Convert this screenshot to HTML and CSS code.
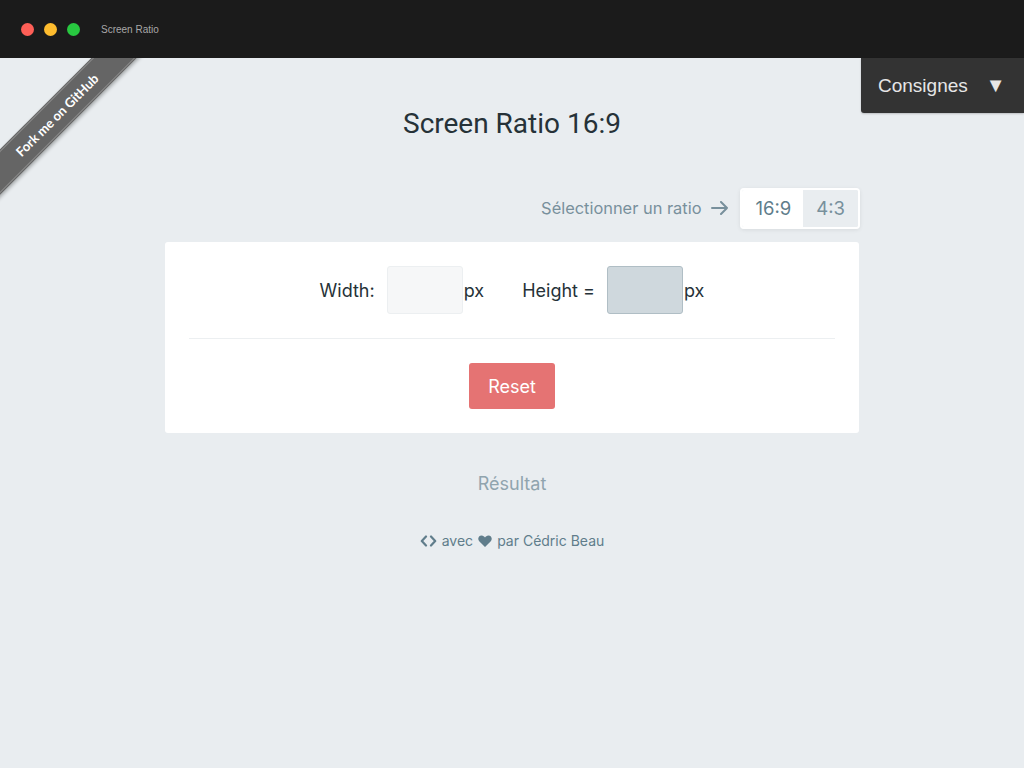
FILE: index.html
```html
<!DOCTYPE html>
<html lang="fr">
<head>
<meta charset="utf-8">
<title>Screen Ratio</title>
<link rel="stylesheet" href="styles.css">
</head>
<body>
<header class="titlebar">
  <span class="light red"></span>
  <span class="light yellow"></span>
  <span class="light green"></span>
  <span class="wintitle">Screen Ratio</span>
</header>
<main class="app">
  <div class="ribbon-wrap"><a class="ribbon">Fork me on GitHub</a></div>
  <div class="consignes">Consignes <span class="tri">&#9660;</span></div>
  <h1 class="title">Screen Ratio 16:9</h1>
  <div class="container">
    <div class="ratio-row">
      <span class="ratio-label">Sélectionner un ratio</span>
      <svg class="arrow" width="18" height="14" viewBox="0 0 18 14"><path d="M1 7h15M10 1l6 6-6 6" fill="none" stroke="#78909c" stroke-width="2" stroke-linecap="round" stroke-linejoin="round"/></svg>
      <div class="ratio-group">
        <span class="ratio active">16:9</span>
        <span class="ratio">4:3</span>
      </div>
    </div>
    <section class="card">
      <div class="fields">
        <label class="lbl">Width:</label>
        <span class="input"></span>
        <span class="unit">px</span>
        <label class="lbl lbl-h">Height =</label>
        <span class="input output"></span>
        <span class="unit">px</span>
      </div>
      <hr class="divider">
      <div class="actions"><button class="reset">Reset</button></div>
    </section>
    <p class="result">Résultat</p>
    <p class="footer">
      <svg width="17" height="12" viewBox="0 0 17 12"><path d="M6 1.5L1.8 6 6 10.5M11 1.5L15.2 6 11 10.5" fill="none" stroke="#607d8b" stroke-width="2.2" stroke-linecap="round" stroke-linejoin="round"/></svg>
      avec
      <svg width="14" height="12" viewBox="0 0 14 12"><path d="M7 12L1.2 6.3C-0.6 4.4 0.2 0.5 3.6 0.4 5.2 0.4 6.3 1.4 7 2.4 7.7 1.4 8.8 0.4 10.4 0.4 13.8 0.5 14.6 4.4 12.8 6.3Z" fill="#607d8b"/></svg>
      par Cédric Beau
    </p>
  </div>
</main>
</body>
</html>
```
FILE: styles.css
```css
* { box-sizing: border-box; }
html, body { margin: 0; padding: 0; }
body {
  width: 1024px;
  height: 768px;
  overflow: hidden;
  background: #e9edf0;
  font-family: Inter, Roboto, "Liberation Sans", sans-serif;
  color: #263238;
}
.titlebar {
  height: 58px;
  background: #1b1b1b;
  display: flex;
  align-items: center;
  padding-left: 21px;
  gap: 10px;
}
.light { width: 13px; height: 13px; border-radius: 50%; display: inline-block; }
.red { background: #fe5f57; }
.yellow { background: #febc2e; }
.green { background: #28c840; }
.wintitle { color: #a8a8a8; font-size: 10px; margin-left: 11px; font-family: "Liberation Sans", sans-serif; }

.app { position: relative; height: 710px; }

.ribbon-wrap {
  position: absolute; left: 0; top: 0;
  width: 150px; height: 200px; overflow: hidden;
}
.ribbon {
  position: absolute;
  left: -63px; top: 42px;
  width: 240px;
  height: 30px;
  transform: rotate(-45deg);
  background: #656565;
  color: #fff;
  font-family: Lato, "Open Sans", sans-serif;
  font-weight: 700;
  font-size: 13px;
  text-align: center;
  line-height: 28px;
  border-top: 1px solid #8a8a8a;
  border-bottom: 1px solid #8a8a8a;
  box-shadow: 0 0 0 1px #656565, 0 2px 4px 1px rgba(0,0,0,0.3);
}

.consignes {
  position: absolute; right: 0; top: 0;
  width: 163px; height: 55px;
  background: #333;
  color: #e6e6e6;
  font-family: "Liberation Sans", sans-serif;
  font-size: 19px;
  display: flex; align-items: center;
  padding-left: 17px;
  border-bottom-left-radius: 3px;
  box-shadow: 0 1px 2px rgba(0,0,0,0.2);
}
.consignes .tri { margin-left: 18px; font-size: 20px; }

.title {
  margin: 0;
  padding-top: 49px;
  text-align: center;
  font-family: Roboto, sans-serif;
  font-weight: 400;
  font-size: 28px;
  color: #263238;
  line-height: 34px;
}

.container { width: 694px; margin: 0 auto; padding-top: 46px; }
.ratio-row { display: flex; justify-content: flex-end; align-items: center; height: 42px; margin-right: -1px; }
.ratio-label { color: #78909c; font-size: 16.4px; }
.arrow { margin: 0 11px 0 10px; }
.ratio-group {
  display: flex;
  border: 2px solid #fff;
  border-radius: 4px;
  box-shadow: 0 1px 4px rgba(0,0,0,0.08);
  overflow: hidden;
}
.ratio { font-size: 18.5px; color: #78909c; padding: 0 13px; line-height: 37px; background: #e9edf0; }
.ratio.active { background: #fff; color: #607d8b; padding: 0 12px 0 13px; }

.card {
  margin-top: 13px;
  background: #fff;
  border-radius: 3px;
  padding: 24px 24px 24px;
  height: 191px;
}
.fields { display: flex; align-items: center; justify-content: center; font-size: 18px; color: #263238; }
.lbl { margin-right: 12px; }
.lbl-h { margin-left: 38px; }
.input {
  width: 76px; height: 48px;
  background: #f6f7f8;
  border: 1px solid #eceff1;
  border-radius: 3px;
}
.input.output { background: #cfd8dd; border-color: #b0bec5; }
.unit { margin-left: 1px; }
.divider { border: 0; border-top: 1px solid #eceff1; margin: 24px 0 24px; }
.actions { display: flex; justify-content: center; }
.reset {
  width: 86px; height: 46px;
  background: #e57373;
  border: 0; border-radius: 3px;
  color: #fff;
  font-family: inherit;
  font-size: 18px;
  padding: 0;
}
.result { margin: 40px 0 0; text-align: center; color: #90a4ae; font-size: 18px; line-height: 22px; }
.footer {
  margin: 37px 0 0;
  text-align: center;
  color: #607d8b;
  font-size: 14px;
  display: flex; justify-content: center; align-items: center; gap: 5px;
}
```
